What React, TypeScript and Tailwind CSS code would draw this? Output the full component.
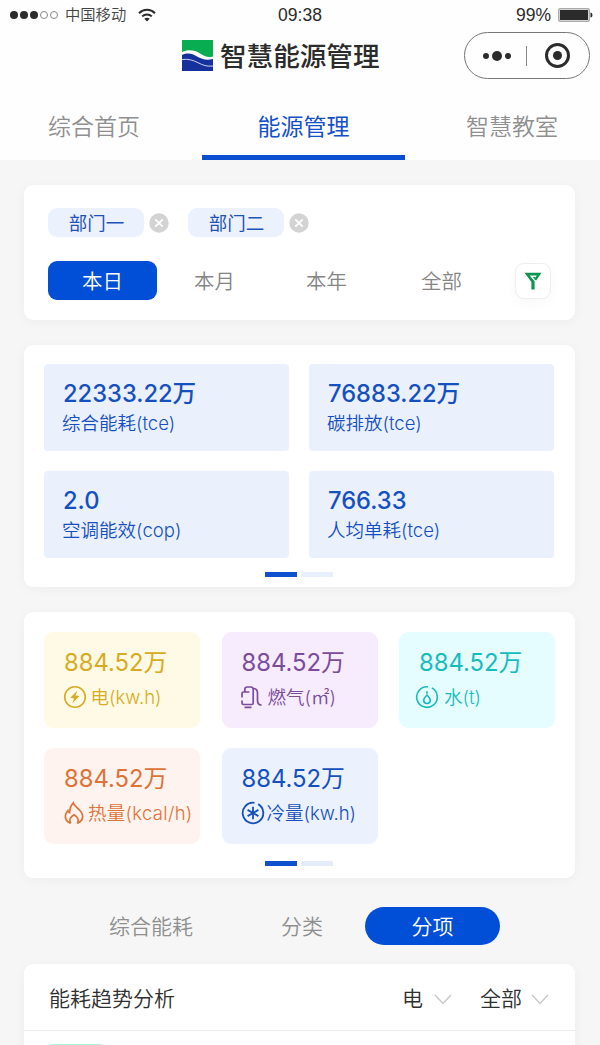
import type { ReactNode } from "react";
import clsx from "clsx";

const tabs = ["综合首页", "能源管理", "智慧教室"];

const summary = [
  { value: "22333.22万", label: "综合能耗(tce)" },
  { value: "76883.22万", label: "碳排放(tce)" },
  { value: "2.0", label: "空调能效(cop)" },
  { value: "766.33", label: "人均单耗(tce)" },
];

function Wifi() {
  return (
    <svg width="18" height="14" viewBox="0 0 18 14" fill="none" stroke="#2b2b2b" strokeWidth="2">
      <path d="M1 5.2C5.5.6 12.5.6 17 5.2" />
      <path d="M4.2 8.4c2.7-2.7 6.9-2.7 9.6 0" />
      <path d="M9 13.5 6.3 10.7c1.5-1.3 3.9-1.3 5.4 0z" fill="#2b2b2b" stroke="none" />
    </svg>
  );
}

function Logo() {
  return (
    <svg width="31" height="31" viewBox="0 0 31 31">
      <path d="M0 0h31v16.5c-5 1.5-9-.5-13-3C13 10.5 7 9 0 12z" fill="#08ad51" />
      <path d="M0 15c6-2.5 10-1.5 15 1.5s10 4 16 2.5v12H0z" fill="#17319c" />
      <path d="M0 19.5c7-.8 11 .7 16 3.2 5 2.6 9 4 15 3.3" fill="none" stroke="#dfe5f6" strokeWidth=".9" />
    </svg>
  );
}

function CloseDot() {
  return (
    <svg width="20" height="20" viewBox="0 0 20 20">
      <circle cx="10" cy="10" r="9.7" fill="#d3d3d3" />
      <path d="m6.3 6.3 7.4 7.4m0-7.4-7.4 7.4" stroke="#fff" strokeWidth="1.8" />
    </svg>
  );
}

function Funnel() {
  return (
    <svg width="18" height="18" viewBox="0 0 18 18" fill="#0c9650">
      <path d="M.5.8h17l-5.300 7.700-2-1.300 2.600-3.700H5.600l5 5.800v8.200H7.400V9.900z" />
      <path d="M9 5h2.600l-1.400 2.200z" />
    </svg>
  );
}

function ElectricIcon() {
  return (
    <svg width="24" height="24" viewBox="0 0 24 24" fill="none" stroke="currentColor" strokeWidth="1.6">
      <circle cx="12" cy="12" r="10.3" />
      <path d="m14.200 5.800-6.900 6.900 3.700.7-1.600 4.900 7-7.200-3.900-.7z" fill="currentColor" stroke="none" />
    </svg>
  );
}

function GasIcon() {
  return (
    <svg width="24" height="24" viewBox="0 0 24 24" fill="none" stroke="currentColor" strokeWidth="1.7">
      <path d="M4.800 7V4.500Q4.800 2 7.300 2h3.400q2.500 0 2.500 2.500V18q0 1.500-1.500 1.500H3.500Q2 19.500 2 18v-2.500M2 12.500V8.600Q2 7 3.600 7h5.800" />
      <path d="M4.500 22.300h7M13.200 3.500c3.300 0 4.300 1.600 4.300 4.500v7.500c0 3 1.500 4.500 4 4.700" />
    </svg>
  );
}

function WaterIcon() {
  return (
    <svg width="24" height="24" viewBox="0 0 24 24" fill="none" stroke="currentColor" strokeWidth="1.6">
      <path d="M16.8 2.9A10.3 10.3 0 1 1 13 1.75" />
      <path d="M12 10c-2.300 2.200-3.300 3.700-3.300 5.200a3.300 3.300 0 0 0 6.600 0c0-1.500-1-3-3.300-5.200z" />
      <path d="M12 6.300v2.400" />
    </svg>
  );
}

function HeatIcon() {
  return (
    <svg width="22" height="24" viewBox="0 0 22 24" fill="none" stroke="currentColor" strokeWidth="1.7">
      <path d="M7.500 22.200C4.200 21 2.300 18.400 2.300 15.300c0-2.200 1-3.900 2.600-5.700.4 1.300.9 1.800 1.700 2C6.800 7.500 8 4 10.300 1.800c.8 4.200 9.400 7 9.400 13.500 0 3.100-2 5.700-5.200 6.900" />
      <path d="M7.700 22.200c-2.200-3.400-.3-6.200 3.300-8.400 3.600 2.200 5.500 5 3.300 8.400" />
    </svg>
  );
}

function ColdIcon() {
  return (
    <svg width="24" height="24" viewBox="0 0 24 24" fill="none" stroke="currentColor" strokeWidth="1.8">
      <path d="M17.2 3.1A10.3 10.3 0 1 1 13.500 1.800" />
      <path d="M12 5.800v12.400M6.600 8.900l10.800 6.200M17.400 8.900 6.600 15.100" />
    </svg>
  );
}

const energies = [
  { label: "电(kw.h)", icon: <ElectricIcon />, box: "bg-[#fefae5] text-[#d9ab20]", row: "-ml-[1.5px] gap-1" },
  { label: "燃气(㎡)", icon: <GasIcon />, box: "bg-[#f7ecfd] text-[#7b4b9c]", row: "-ml-[2px] gap-1" },
  { label: "水(t)", icon: <WaterIcon />, box: "bg-[#e6fdff] text-[#16bcbd]", row: "-ml-1 gap-[5px]" },
  { label: "热量(kcal/h)", icon: <HeatIcon />, box: "bg-[#fef3ef] text-[#df7236]", row: "-ml-px gap-[3px] tracking-[0.3px]" },
  { label: "冷量(kw.h)", icon: <ColdIcon />, box: "bg-[#ebf1fd] text-[#1450be]", row: "-ml-px gap-[2px]" },
];

function Card({ className, children }: { className?: string; children: ReactNode }) {
  return (
    <section className={clsx("ml-6 w-[551px] rounded-[9px] bg-white shadow-[0_2px_12px_rgba(0,0,0,0.04)]", className)}>
      {children}
    </section>
  );
}

function Pager({ className, rest }: { className: string; rest: string }) {
  return (
    <div className={clsx("flex justify-center gap-1 pr-px", className)}>
      <span className="h-[5px] w-8 bg-[#0f50cf]" />
      <span className={clsx("h-[5px] w-8", rest)} />
    </div>
  );
}

function Chevron() {
  return (
    <svg width="18" height="11" viewBox="0 0 18 11" fill="none" stroke="#c9c9c9" strokeWidth="1.5">
      <path d="m1 1 8 8.500L17 1" />
    </svg>
  );
}

function Chip({ text }: { text: string }) {
  return (
    <div className="flex items-center gap-[5px]">
      <span className="flex h-[29px] w-24 items-center justify-center rounded-[9px] bg-[#ecf1fe] pt-[2px] pl-px text-[18.500px] font-normal text-[#1c53b8]">
        {text}
      </span>
      <CloseDot />
    </div>
  );
}

export default function App() {
  return (
    <div className="flex h-[1045px] w-[600px] flex-col overflow-hidden whitespace-nowrap bg-[#f6f6f6] font-[Inter,'Noto_Sans_CJK_SC',sans-serif] font-[350]">
      <header className="h-[160px] shrink-0 bg-[#fefefe] text-[#2b2b2b]">
        <div className="grid h-[29px] grid-cols-3 items-center px-2.5">
          <div className="flex items-center">
            <div className="flex gap-[2px]">
              <i className="size-2 rounded-full bg-[#2b2b2b]" />
              <i className="size-2 rounded-full bg-[#2b2b2b]" />
              <i className="size-2 rounded-full bg-[#2b2b2b]" />
              <i className="size-2 rounded-full border border-[#888]" />
              <i className="size-2 rounded-full border border-[#888]" />
            </div>
            <span className="mt-px mr-3 ml-[7px] text-[15.300px] text-[#444]">中国移动</span>
            <Wifi />
          </div>
          <span className="pt-px text-center font-['Liberation_Sans'] text-[17.500px] font-normal">09:38</span>
          <div className="-mr-[3px] flex items-center justify-end gap-[7px]">
            <span className="pt-px font-['Liberation_Sans'] text-[17.500px] font-normal">99%</span>
            <svg width="35" height="14" viewBox="0 0 35 14">
              <rect x=".8" y=".8" width="30.5" height="12.4" rx="1.5" fill="none" stroke="#aaa" strokeWidth="1.5" />
              <rect x="2" y="2" width="28" height="10" fill="#2b2b2b" />
              <path d="M32.500 4.500q2 0 2 2.500t-2 2.500z" fill="#2b2b2b" />
            </svg>
          </div>
        </div>

        <div className="flex h-[53px] items-center pl-[182px]">
          <Logo />
          <h1 className="mt-[2px] ml-[7px] text-[26.600px] font-medium">智慧能源管理</h1>
          <div className="mr-2.5 ml-auto flex h-[47px] w-[126px] items-center rounded-full border border-[#777] pl-[18px]">
            <i className="size-[6px] rounded-full bg-[#2b2b2b]" />
            <i className="mx-[3px] size-[10px] rounded-full bg-[#2b2b2b]" />
            <i className="size-[6px] rounded-full bg-[#2b2b2b]" />
            <i className="ml-[15px] h-5 w-px bg-[#888]" />
            <span className="ml-[18px] flex size-[25px] items-center justify-center rounded-full border-[3px] border-[#2b2b2b]">
              <i className="size-[9px] rounded-full bg-[#2b2b2b]" />
            </span>
          </div>
        </div>

        <nav className="grid h-[78px] grid-cols-[188px_231px_186px] justify-items-center text-[23px]">
          {tabs.map((tab) => (
            <span
              key={tab}
              className={clsx(
                "flex items-center justify-center border-b-[5px] pt-[18px]",
                tab === "能源管理" ? "w-[203px] border-[#0a4fd2] font-normal text-[#1450c8]" : "border-transparent text-[#8f8f8f]",
              )}
            >
              {tab}
            </span>
          ))}
        </nav>
      </header>

      <main className="flex flex-col pt-[25px]">
        <Card className="h-[135px] pt-[23px]">
          <div className="flex gap-[19px] pl-6">
            <Chip text="部门一" />
            <Chip text="部门二" />
          </div>
          <div className="mt-6 flex h-[39px] items-center pl-6 text-[20.500px] text-[#858585]">
            <span className="flex h-[39px] w-[109px] items-center justify-center rounded-[9px] bg-[#014fd7] pt-1 text-white">
              本日
            </span>
            <span className="ml-[37px] w-[112px] pt-1">本月</span>
            <span className="w-[115px] pt-1">本年</span>
            <span className="pt-1">全部</span>
            <span className="mr-[24px] ml-auto flex size-[36px] items-center justify-center rounded-[9px] border border-[#eee] bg-white shadow-[0_4px_12px_rgba(0,0,0,0.03)]">
              <Funnel />
            </span>
          </div>
        </Card>

        <Card className="mt-[25px] h-[242px] pt-[19px]">
          <div className="grid grid-cols-[245px_245px] gap-5 pl-5">
            {summary.map((item) => (
              <div key={item.label} className="h-[87px] rounded-[4px] bg-[#ebf0fd] pt-[13px] pl-[19px] text-[#1550c0]">
                <div className="text-[23.700px] leading-[33px] font-[450]">{item.value}</div>
                <div className="-ml-px text-[18.500px] leading-[26px]">{item.label}</div>
              </div>
            ))}
          </div>
          <Pager className="mt-3.5" rest="bg-[#e8effd]" />
        </Card>

        <Card className="mt-[25px] h-[266px] pt-5">
          <div className="grid grid-cols-[156px_156px_156px] gap-x-[21.500px] gap-y-5 pl-5">
            {energies.map((item) => (
              <div key={item.label} className={clsx("h-[96px] rounded-[9px] pt-[14px] pl-5", item.box)}>
                <div className="text-[23.800px] leading-[33px] font-normal">884.52万</div>
                <div className={clsx("flex h-[36px] items-center text-[18.500px]", item.row)}>
                  {item.icon}
                  <span className="pt-[2px]">{item.label}</span>
                </div>
              </div>
            ))}
          </div>
          <Pager className="mt-[17px]" rest="bg-[#e4edf9]" />
        </Card>

        <div className="mt-[29px] flex h-[38px] items-center pl-[109px] text-[21px] text-[#8f8f8f]">
          <span className="w-[172px] pt-[2px]">综合能耗</span>
          <span className="w-[84px] pt-[2px]">分类</span>
          <span className="flex h-[38px] w-[135px] items-center justify-center rounded-full bg-[#014fd7] pt-[2px] text-white">
            分项
          </span>
        </div>

        <Card className="mt-[19px] h-[100px]">
          <div className="flex h-[67px] items-center border-b border-[#ececec] pt-1 pr-[26px] pl-[25px] text-[21px] text-[#2f2f2f]">
            <h2>能耗趋势分析</h2>
            <span className="mr-[11px] ml-auto">电</span>
            <Chevron />
            <span className="mr-[9px] ml-[28px]">全部</span>
            <Chevron />
          </div>
          <div className="mt-[13px] ml-[25px] h-5 w-[55px] rounded-t bg-[#a9f5d5]" />
        </Card>
      </main>
    </div>
  );
}
